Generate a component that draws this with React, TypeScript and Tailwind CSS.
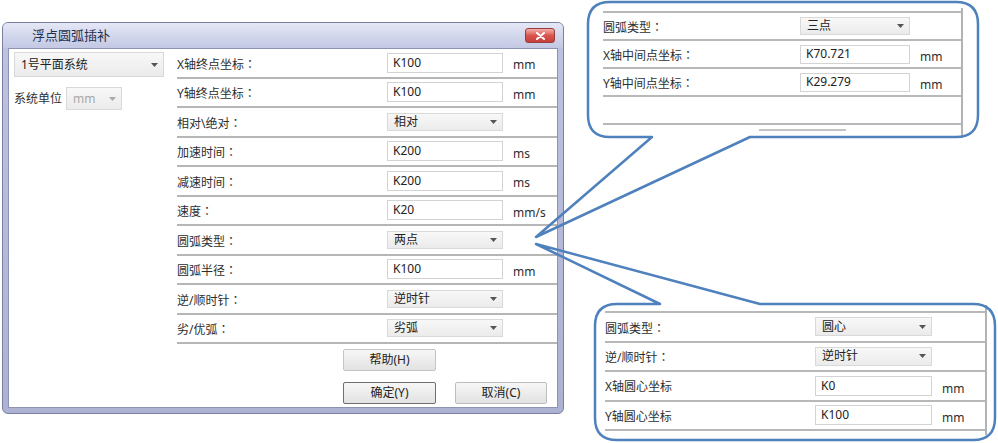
import React from "react";

const Arrow = ({ color = "#555" }: { color?: string }) => (
  <svg width="7" height="4" viewBox="0 0 7 4">
    <path d="M0 0h7L3.5 4z" fill={color} />
  </svg>
);

const Label = ({ text, cls }: { text: string; cls: string }) => {
  const hasColon = text.endsWith("：");
  const body = hasColon ? text.slice(0, -1) : text;
  return (
    <span className={`leading-none ${cls}`}>
      {body}
      {hasColon && <span className="font-['Noto_Sans_CJK_TC',sans-serif]">：</span>}
    </span>
  );
};

const Select = ({ value, cls, disabled }: { value: string; cls: string; disabled?: boolean }) => (
  <div
    className={`flex items-center justify-between border border-[#d9d9d9] bg-linear-to-b from-[#f8f8f8] to-[#ebebeb] pl-[6px] pr-[5px] ${cls} ${
      disabled ? "text-[#a8a8a8]" : "text-[#222]"
    }`}
  >
    <span className="leading-none">{value}</span>
    <Arrow color={disabled ? "#aaa" : "#555"} />
  </div>
);

const Input = ({ value, cls }: { value: string; cls: string }) => (
  <div className={`flex items-center border border-[#d3d3d3] bg-white pl-[5px] text-[#222] ${cls}`}>
    <span className="leading-none">{value}</span>
  </div>
);

type Row = { label: string; kind: "i" | "s"; value: string; unit?: string };

const mainRows: Row[] = [
  { label: "X轴终点坐标：", kind: "i", value: "K100", unit: "mm" },
  { label: "Y轴终点坐标：", kind: "i", value: "K100", unit: "mm" },
  { label: "相对\\绝对：", kind: "s", value: "相对" },
  { label: "加速时间：", kind: "i", value: "K200", unit: "ms" },
  { label: "减速时间：", kind: "i", value: "K200", unit: "ms" },
  { label: "速度：", kind: "i", value: "K20", unit: "mm/s" },
  { label: "圆弧类型：", kind: "s", value: "两点" },
  { label: "圆弧半径：", kind: "i", value: "K100", unit: "mm" },
  { label: "逆/顺时针：", kind: "s", value: "逆时针" },
  { label: "劣/优弧：", kind: "s", value: "劣弧" },
];

const upperRows: Row[] = [
  { label: "圆弧类型：", kind: "s", value: "三点" },
  { label: "X轴中间点坐标：", kind: "i", value: "K70.721", unit: "mm" },
  { label: "Y轴中间点坐标：", kind: "i", value: "K29.279", unit: "mm" },
];

const lowerRows: Row[] = [
  { label: "圆弧类型：", kind: "s", value: "圆心" },
  { label: "逆/顺时针：", kind: "s", value: "逆时针" },
  { label: "X轴圆心坐标", kind: "i", value: "K0", unit: "mm" },
  { label: "Y轴圆心坐标", kind: "i", value: "K100", unit: "mm" },
];

const Btn = ({ text, cls }: { text: string; cls: string }) => (
  <div
    className={`flex h-[22px] items-center justify-center rounded-[2px] bg-linear-to-b from-[#f7f7f7] to-[#e2e2e2] text-[12px] text-[#222] ${cls}`}
  >
    <span className="leading-none">{text}</span>
  </div>
);

export default function App() {
  return (
    <div className="relative h-[443px] w-[998px] overflow-hidden bg-white font-['Noto_Sans','Noto_Sans_CJK_SC',sans-serif] text-[12px] text-[#2e2e2e]">
      {/* Dialog */}
      <div className="ml-[2px] mt-[22px] flex h-[392px] w-[562px] flex-col rounded-[6px] border border-[#7a7fa3] bg-linear-to-b from-[#bec3e1] to-[#adb2d3]">
        <div className="flex h-[25px] items-center justify-between rounded-t-[5px] bg-linear-to-b from-[#e4e7f5] to-[#c3c8e4] pl-[29px] pr-[8px]">
          <span className="text-[13px] leading-none text-[#22304f]">浮点圆弧插补</span>
          <div className="flex h-[15px] w-[30px] items-center justify-center rounded-[3px] border border-[#9a3b3b] bg-linear-to-b from-[#f2b0ac] via-[#d9534f] to-[#c6403c]">
            <svg width="9" height="8" viewBox="0 0 9 8">
              <path d="M1 1l7 6M8 1L1 7" stroke="#fff" strokeWidth="2" strokeLinecap="round" />
            </svg>
          </div>
        </div>
        <div className="mx-[5px] mb-[5px] flex flex-1 border border-[#8e93b6] bg-white">
          {/* left panel */}
          <div className="w-[168px] pl-[5px] pt-[3px]">
            <Select value="1号平面系统" cls="h-[25px] w-[150px] text-[12px]" />
            <div className="mt-[10px] flex items-center">
              <span className="w-[52px] leading-none">系统单位</span>
              <Select value="mm" cls="h-[23px] w-[56px] text-[12px]" disabled />
            </div>
          </div>
          {/* right column */}
          <div className="flex-1">
            {mainRows.map((r) => (
              <div key={r.label} className="flex h-[29.5px] items-center border-b-2 border-[#b6b6b6]">
                <Label text={r.label} cls="w-[210px] pt-[3px]" />
                {r.kind === "i" ? (
                  <Input value={r.value} cls="h-[20px] w-[116px]" />
                ) : (
                  <Select value={r.value} cls="h-[18px] w-[116px]" />
                )}
                {r.unit && <span className="ml-[10px] pt-[5px] leading-none">{r.unit}</span>}
              </div>
            ))}
            <div className="pl-[166px] pt-[5px]">
              <Btn text="帮助(H)" cls="w-[93px] border border-[#c4c4c4]" />
              <div className="mt-[11px] flex gap-[19px]">
                <Btn text="确定(Y)" cls="w-[93px] border border-[#6f6f6f]" />
                <Btn text="取消(C)" cls="w-[92px] border border-[#bdbdbd]" />
              </div>
            </div>
          </div>
        </div>
      </div>

      {/* Upper callout content */}
      <div className="absolute left-[603px] top-[8px] w-[360px] border-r-2 border-[#b3b3b3] pb-[6px] pt-[3px]">
        <div className="border-t-2 border-[#b8b8b8]">
          {upperRows.map((r) => (
            <div key={r.label} className="flex h-[28px] items-center border-b-2 border-[#b8b8b8]">
              <Label text={r.label} cls="w-[197px] pt-[3px]" />
              {r.kind === "i" ? (
                <Input value={r.value} cls="h-[19px] w-[110px]" />
              ) : (
                <Select value={r.value} cls="h-[18px] w-[110px]" />
              )}
              {r.unit && <span className="ml-[10px] pt-[5px] leading-none">{r.unit}</span>}
            </div>
          ))}
          <div className="h-[28px] border-b-2 border-[#b8b8b8]" />
        </div>
        <div className="ml-[156px] mt-[4px] h-[2px] w-[87px] bg-[#c4c4c4]" />
      </div>

      {/* Lower callout content */}
      <div className="absolute left-[605px] top-[305px] h-[130px] w-[382px] border-r-2 border-[#b3b3b3] pt-[6px]">
        <div className="border-t-2 border-[#b8b8b8]">
          {lowerRows.map((r) => (
            <div key={r.label} className="flex h-[29.5px] items-center border-b-2 border-[#b8b8b8]">
              <Label text={r.label} cls="w-[210px] pt-[3px]" />
              {r.kind === "i" ? (
                <Input value={r.value} cls="h-[20px] w-[117px]" />
              ) : (
                <Select value={r.value} cls="h-[19px] w-[117px]" />
              )}
              {r.unit && <span className="ml-[10px] pt-[6px] leading-none">{r.unit}</span>}
            </div>
          ))}
        </div>
      </div>

      {/* Callout outlines */}
      <svg className="pointer-events-none absolute left-0 top-0" width="998" height="443" viewBox="0 0 998 443">
        <path
          d="M652 137 L536 237 L750 137 L956 137 Q978 137 978 115 L978 24 Q978 2 956 2 L610 2 Q588 2 588 24 L588 115 Q588 137 610 137 Z"
          fill="none"
          stroke="#4f81bd"
          strokeWidth="2.5"
          strokeLinejoin="round"
        />
        <path
          d="M660 304 L536 244 L760 304 L973 304 Q995 304 995 326 L995 418 Q995 440 973 440 L617 440 Q595 440 595 418 L595 326 Q595 304 617 304 Z"
          fill="none"
          stroke="#4f81bd"
          strokeWidth="2.5"
          strokeLinejoin="round"
        />
      </svg>
    </div>
  );
}
